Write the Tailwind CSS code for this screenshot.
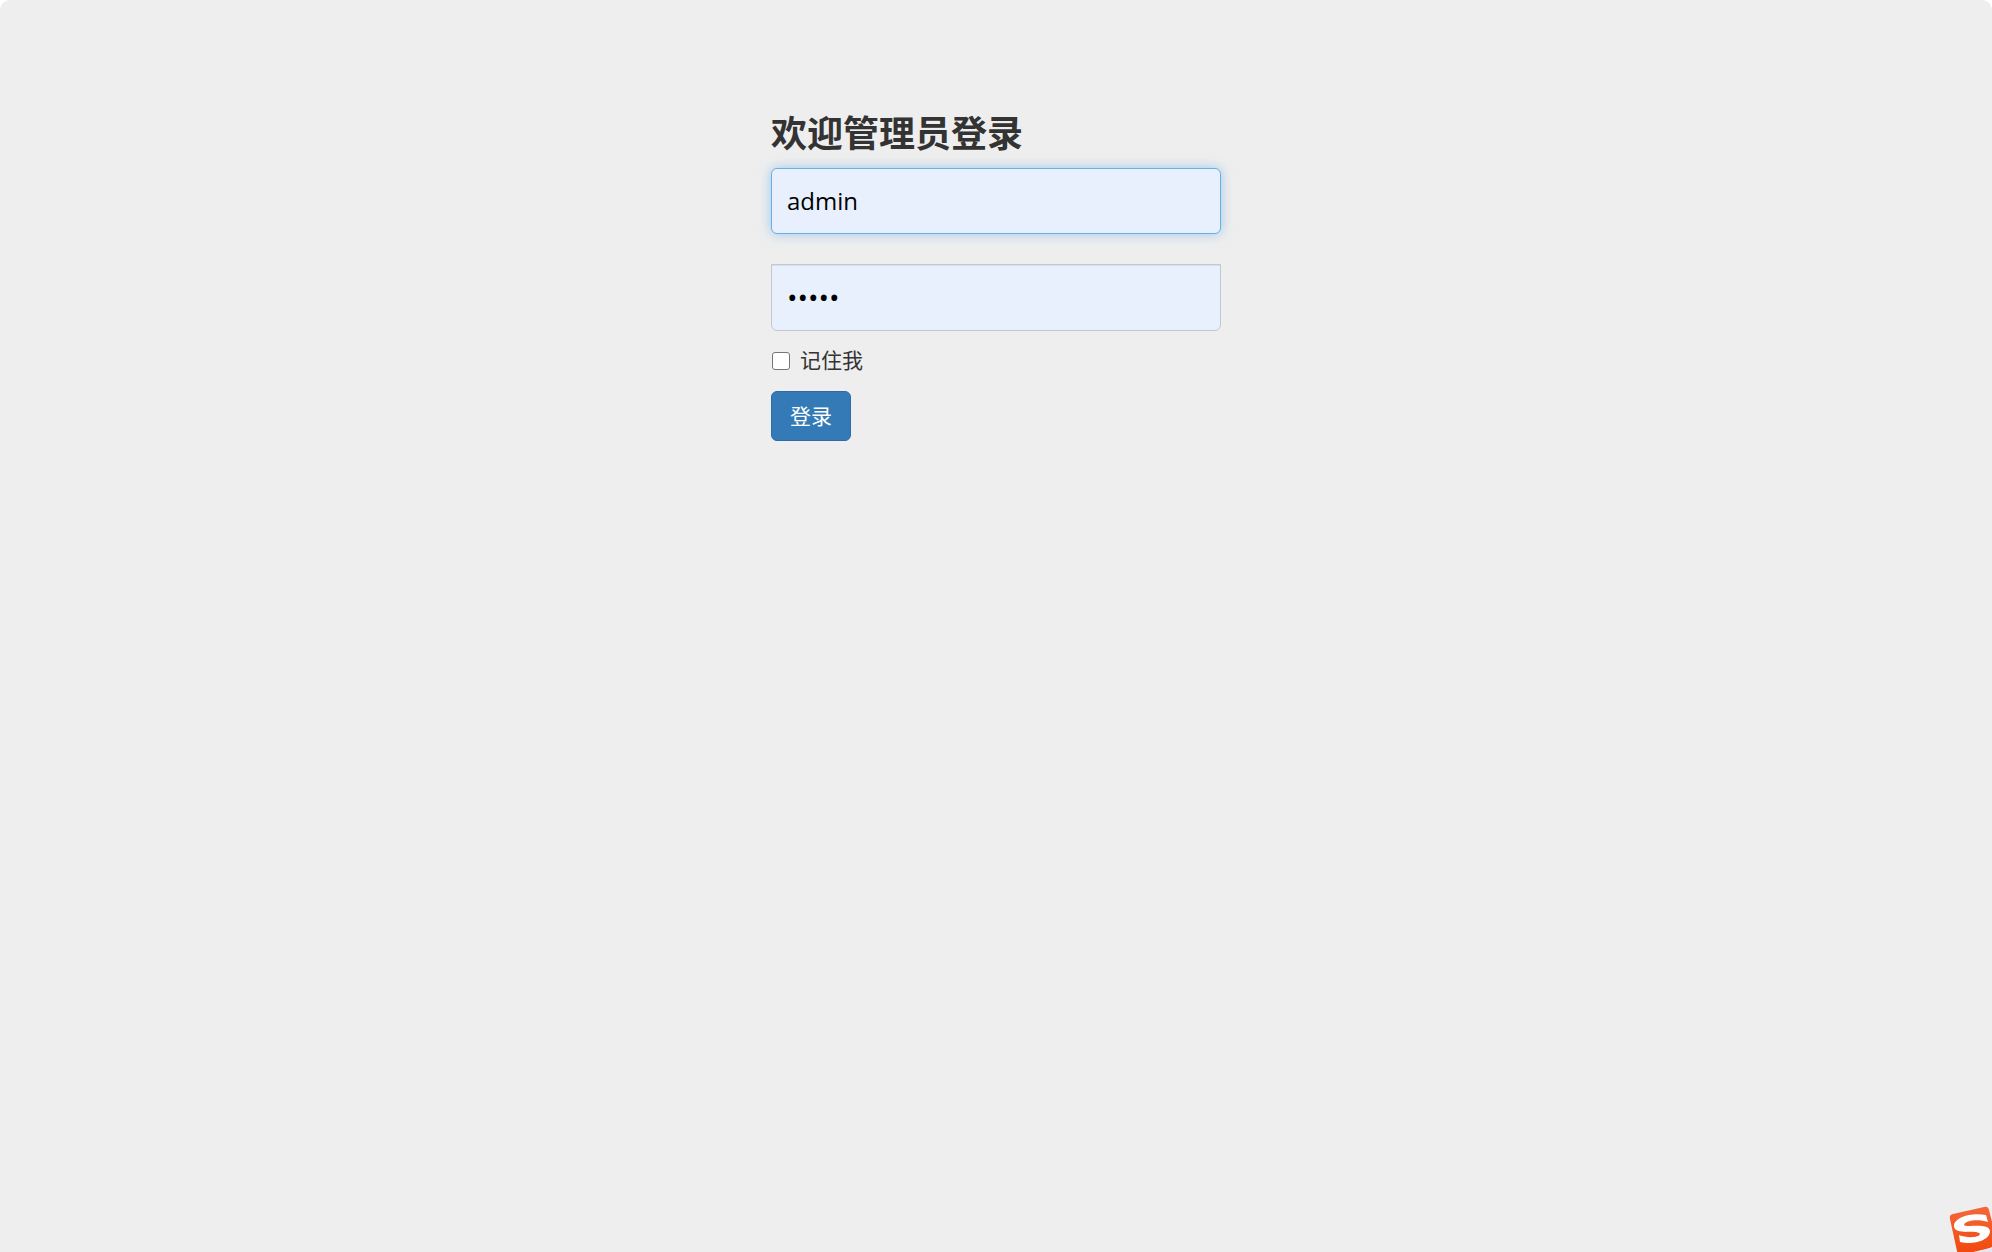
<!DOCTYPE html>
<html lang="zh-CN">
<head>
    <meta charset="UTF-8">
    <meta name="viewport" content="width=device-width, initial-scale=1.0">
    <title>管理员登录</title>
    <script src="https://cdn.jsdelivr.net/npm/@tailwindcss/browser@4"></script>
</head>
<body class="bg-white font-['Open_Sans','Noto_Sans_CJK_SC',sans-serif] text-[#333]">
    <div class="min-h-screen overflow-hidden rounded-t-[10px] bg-[#eee] px-6 pt-[110px]">
        <form id="login-form" class="mx-auto w-full max-w-[450px]">
            <h1 class="mb-[10px] text-4xl leading-12 font-bold">欢迎管理员登录</h1>
            <input type="text" id="username" name="username" value="admin" aria-label="用户名" class="block h-[66px] w-full rounded-md border border-[#66afe9] bg-[#e8f0fe] px-[15px] pb-[2px] text-2xl text-black shadow-[0_0_12px_rgba(102,175,233,0.6)] outline-none">
            <input type="password" id="password" name="password" value="admin" aria-label="密码" class="mt-[30px] block h-[67px] w-full rounded-b-md border border-[#c4c7cf] bg-[#e8f0fe] px-[15px] pb-[2px] text-[28px] text-black shadow-[inset_0_1px_1px_rgba(0,0,0,0.075)] outline-none">
            <div class="mt-[14px] flex items-end gap-[10px]">
                <input type="checkbox" id="remember" name="remember" class="mb-[5px] ml-px size-[18px] appearance-none rounded-[3px] border border-[#767676] bg-white checked:bg-[#337ab7]">
                <label for="remember" class="text-[21px] leading-[30px]">记住我</label>
            </div>
            <button type="submit" class="mt-4 h-[50px] rounded-md border border-[#2e6da4] bg-[#337ab7] px-[18px] text-[21px] leading-[30px] text-white hover:bg-[#286090]">登录</button>
        </form>
    </div>

    <!-- 输入法图标 -->
    <svg class="fixed right-0 bottom-0 h-[48px] w-[46px]" viewBox="0 0 46 48" aria-hidden="true">
        <defs>
            <linearGradient id="ime-bg" x1="0" y1="0" x2="0" y2="1">
                <stop offset="0" stop-color="#f4683a" />
                <stop offset="1" stop-color="#f0480c" />
            </linearGradient>
        </defs>
        <path d="M7 10 L38 3 Q42 2 43 6 L52 42 L15 51 Q12 51 11 47 L4 15 Q3 11 7 10Z" fill="url(#ime-bg)" />
        <path d="M40 11 C26 8 8 13 8 22 C8 32 33 25 34 30 C33 34 20 34 13 31 L14 38 C26 41 44 37 44 27 C43 18 20 24 18 21 C19 16 33 15 42 18Z" fill="#fff" />
        <path d="M28 48 Q38 47 46 43 V48Z" fill="#e2e6f5" />
    </svg>

    <script>
        // 登录前检查
        document.getElementById('login-form').addEventListener('submit', (e) => {
            e.preventDefault();
            const username = document.getElementById('username').value;
            const password = document.getElementById('password').value;
            if (!username || !password) {
                alert('请输入用户名和密码');
            }
        });
    </script>
</body>
</html>
